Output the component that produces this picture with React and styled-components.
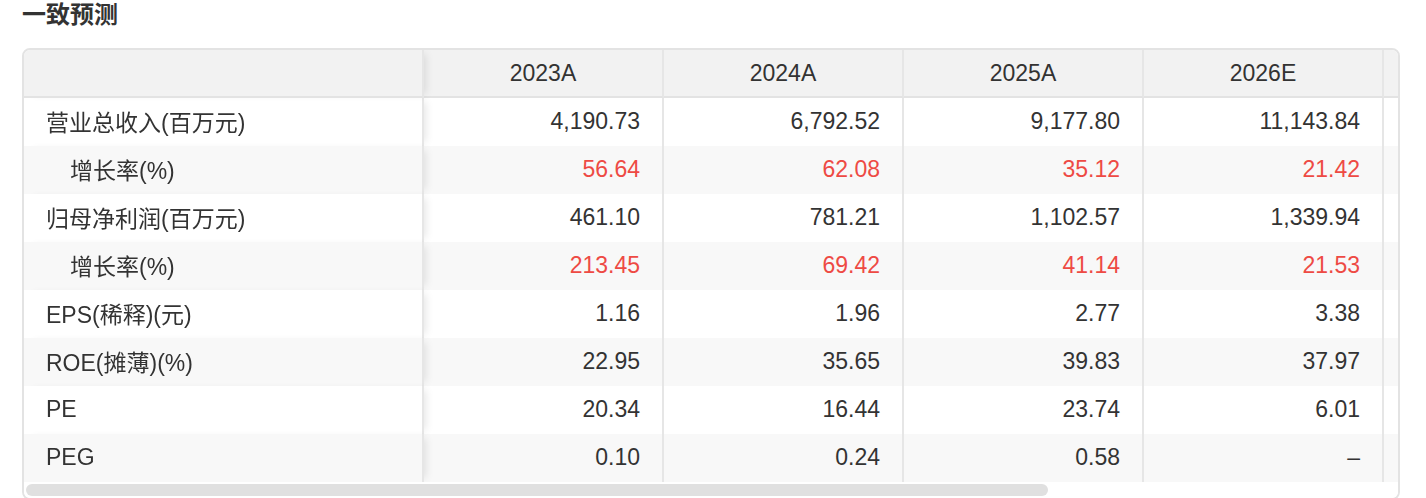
import styled, { createGlobalStyle } from "styled-components";

const GlobalStyle = createGlobalStyle`
  html, body {
    margin: 0;
    padding: 0;
    background: #fff;
  }
  body {
    font-family: "Liberation Sans", "Noto Sans CJK SC", sans-serif;
    color: #333;
  }
`;

const Page = styled.div`
  padding: 0 26px 0 22px;
`;

const Title = styled.h2`
  margin: 0 0 18px;
  font-size: 24px;
  line-height: 30px;
  font-weight: 700;
  color: #333;
`;

const Frame = styled.div`
  border: 2px solid #e3e3e3;
  border-radius: 8px;
  overflow: hidden;
`;

const Scroller = styled.div`
  overflow-x: auto;
  overflow-y: hidden;
  scrollbar-width: none;

  &::-webkit-scrollbar {
    display: none;
  }
`;

const ScrollTrack = styled.div`
  height: 16px;
  padding: 2px;
  box-sizing: border-box;
  background: #fff;
`;

const ScrollThumb = styled.div`
  height: 12px;
  border-radius: 6px;
  background: #e0e0e0;
`;

const Table = styled.table`
  border-collapse: separate;
  border-spacing: 0;
  table-layout: fixed;
  width: 1840px;
  font-size: 23px;
`;

const HeadCell = styled.th`
  box-sizing: border-box;
  height: 48px;
  padding: 0 22px;
  background: #f2f2f2;
  border-bottom: 2px solid #e3e3e3;
  border-right: 2px solid #e6e6e6;
  font-weight: 400;
  text-align: center;
  color: #333;
  width: ${({ $first }) => ($first ? "400px" : "240px")};

  &:first-child {
    position: sticky;
    left: 0;
    z-index: 2;
    box-shadow: 6px 0 8px -4px rgba(0, 0, 0, 0.1);
  }
`;

const Row = styled.tr`
  background: ${({ $even }) => ($even ? "#f8f8f8" : "#fff")};
`;

const LabelCell = styled.td`
  position: sticky;
  left: 0;
  z-index: 1;
  box-sizing: border-box;
  height: 48px;
  padding: 0 22px 2px ${({ $indent }) => ($indent ? "46px" : "22px")};
  background-color: ${({ $even }) => ($even ? "#f8f8f8" : "#fff")};
  border-right: 2px solid #e6e6e6;
  box-shadow: 6px 0 8px -4px rgba(0, 0, 0, 0.1);
  text-align: left;
  white-space: nowrap;
  color: #333;
`;

const ValueCell = styled.td`
  box-sizing: border-box;
  height: 48px;
  padding: 0 22px 2px;
  border-right: 2px solid #e6e6e6;
  text-align: right;
  white-space: nowrap;
  color: ${({ $red }) => ($red ? "#ee4a44" : "#333")};
`;

const years = ["2023A", "2024A", "2025A", "2026E", "2027E", "2028E"];

const rows = [
  { label: "营业总收入(百万元)", values: ["4,190.73", "6,792.52", "9,177.80", "11,143.84", "13,206.35", "15,388.92"] },
  { label: "增长率(%)", indent: true, red: true, values: ["56.64", "62.08", "35.12", "21.42", "18.51", "16.53"] },
  { label: "归母净利润(百万元)", values: ["461.10", "781.21", "1,102.57", "1,339.94", "1,598.27", "1,872.40"] },
  { label: "增长率(%)", indent: true, red: true, values: ["213.45", "69.42", "41.14", "21.53", "19.28", "17.15"] },
  { label: "EPS(稀释)(元)", values: ["1.16", "1.96", "2.77", "3.38", "4.03", "4.72"] },
  { label: "ROE(摊薄)(%)", values: ["22.95", "35.65", "39.83", "37.97", "35.12", "32.60"] },
  { label: "PE", values: ["20.34", "16.44", "23.74", "6.01", "5.04", "4.30"] },
  { label: "PEG", values: ["0.10", "0.24", "0.58", "–", "–", "–"] },
];

// visible share of the scrolled table, for the thumb width
const visibleShare = 1373 / 1840;

export default function App() {
  return (
    <>
      <GlobalStyle />
      <Page>
        <Title>一致预测</Title>
        <Frame>
          <Scroller>
            <Table>
              <thead>
                <tr>
                  <HeadCell $first />
                  {years.map((y) => (
                    <HeadCell key={y}>{y}</HeadCell>
                  ))}
                </tr>
              </thead>
              <tbody>
                {rows.map((row, i) => (
                  <Row key={i} $even={i % 2 === 1}>
                    <LabelCell $indent={row.indent} $even={i % 2 === 1}>
                      {row.label}
                    </LabelCell>
                    {row.values.map((v, j) => (
                      <ValueCell key={j} $red={row.red}>
                        {v}
                      </ValueCell>
                    ))}
                  </Row>
                ))}
              </tbody>
            </Table>
          </Scroller>
          <ScrollTrack>
            <ScrollThumb style={{ width: `${visibleShare * 100}%` }} />
          </ScrollTrack>
        </Frame>
      </Page>
    </>
  );
}
